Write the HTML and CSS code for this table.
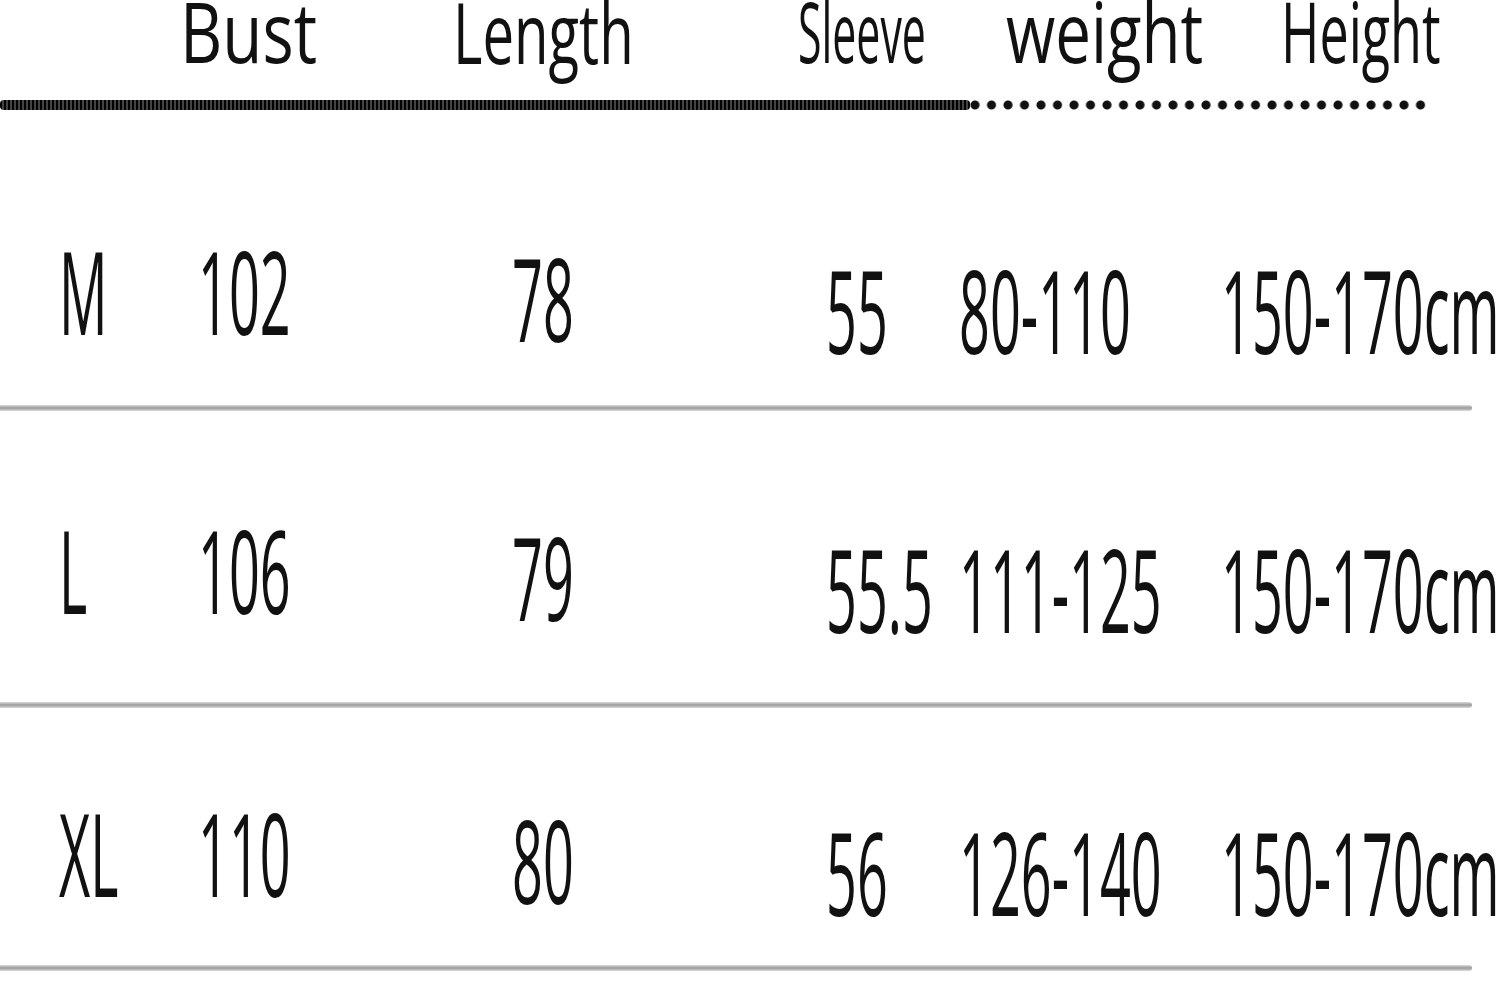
FILE: index.html
```html
<!DOCTYPE html>
<html lang="en">
<head>
<meta charset="utf-8">
<title>Size chart</title>
<link rel="stylesheet" href="styles.css">
</head>
<body>
<div class="chart">
  <div class="head">
    <div class="hc hc-bust"><span class="ht ht-bust">Bust</span></div>
    <div class="hc hc-length"><span class="ht ht-length">Length</span></div>
    <div class="hc hc-sleeve"><span class="ht ht-sleeve">Sleeve</span></div>
    <div class="hc hc-weight"><span class="ht ht-weight">weight</span></div>
    <div class="hc hc-height"><span class="ht ht-height">Height</span></div>
  </div>
  <div class="dotline"><div class="dense"></div><div class="dots"></div></div>

  <div class="row row-m">
    <div class="c c1"><span class="t">M</span></div>
    <div class="c c2"><span class="t">102</span></div>
    <div class="c c3"><span class="t">78</span></div>
    <div class="c c4"><span class="t">55</span></div>
    <div class="c c5"><span class="t">80-110</span></div>
    <div class="c c6"><span class="t">150-170cm</span></div>
  </div>
  <div class="rule"></div>

  <div class="row row-l">
    <div class="c c1"><span class="t">L</span></div>
    <div class="c c2"><span class="t">106</span></div>
    <div class="c c3"><span class="t">79</span></div>
    <div class="c c4"><span class="t">55.5</span></div>
    <div class="c c5"><span class="t">111-125</span></div>
    <div class="c c6"><span class="t">150-170cm</span></div>
  </div>
  <div class="rule"></div>

  <div class="row row-xl">
    <div class="c c1"><span class="t">XL</span></div>
    <div class="c c2"><span class="t">110</span></div>
    <div class="c c3"><span class="t">80</span></div>
    <div class="c c4"><span class="t">56</span></div>
    <div class="c c5"><span class="t">126-140</span></div>
    <div class="c c6"><span class="t">150-170cm</span></div>
  </div>
  <div class="rule"></div>
</div>
</body>
</html>
```

FILE: styles.css
```css
html, body {
  margin: 0;
  padding: 0;
  background: #ffffff;
}
body {
  width: 1500px;
  height: 984px;
  overflow: hidden;
  font-family: "Open Sans", "Noto Sans", sans-serif;
  color: #111111;
}
.chart {
  width: 1500px;
}

/* header */
.head {
  display: flex;
  align-items: flex-start;
  height: 99px;
  padding-left: 180px;
  box-sizing: border-box;
}
.hc {
  flex: none;
  white-space: nowrap;
}
.hc-bust { width: 273px; }
.hc-length { width: 345px; }
.hc-sleeve { width: 208px; }
.hc-weight { width: 275px; }
.hc-height { flex: 1; }
.ht {
  display: block;
  font-weight: 400;
  line-height: 0.7476;
  padding-bottom: 0.262em;
  transform-origin: left top;
}
.ht-bust { font-size: 65.5px; transform: scaleY(1.282); }
.ht-length { font-size: 56.3px; transform: scaleY(1.4925); }
.ht-sleeve { font-size: 42.84px; transform: scaleY(1.961); }
.ht-weight { font-size: 63.6px; transform: scaleY(1.321); }
.ht-height { font-size: 52.1px; transform: scaleY(1.613); }

/* dotted rule under header */
.dotline {
  display: flex;
  width: 1427px;
  height: 12px;
}
.dense {
  width: 970px;
  height: 10px;
  margin-top: 1px;
  background:
    repeating-linear-gradient(90deg, #000 0 2.5px, #444 2.5px 4px);
  border-radius: 4px;
  filter: blur(0.4px);
}
.dots {
  flex: 1;
  height: 12px;
  background: radial-gradient(circle at 5px 6px, #111 0 4px, transparent 5px);
  background-size: 16.5px 12px;
}

/* data rows */
.row {
  display: flex;
  align-items: flex-start;
  padding-left: 59px;
  box-sizing: border-box;
}
.row-m { padding-top: 130px; padding-bottom: 45px; }
.row-l { padding-top: 109px; padding-bottom: 63px; }
.row-xl { padding-top: 95px; padding-bottom: 43px; }
.c {
  flex: none;
  height: 100px;
  white-space: nowrap;
}
.c1 { width: 139px; }
.c2 { width: 314px; }
.c3 { width: 314px; margin-top: 7px; }
.c4 { width: 133px; margin-top: 19px; }
.c5 { width: 262px; margin-top: 19px; }
.c6 { flex: 1; margin-top: 19px; }
.t {
  display: block;
  font-size: 54px;
  font-weight: 500;
  line-height: 47px;
  transform-origin: left top;
  transform: scaleY(2.128);
}

.rule {
  width: 1472px;
  height: 6px;
  border-radius: 0 3px 3px 0;
  background: linear-gradient(to bottom, #dcdcdc 0%, #9a9a9a 50%, #dcdcdc 100%);
}
```
